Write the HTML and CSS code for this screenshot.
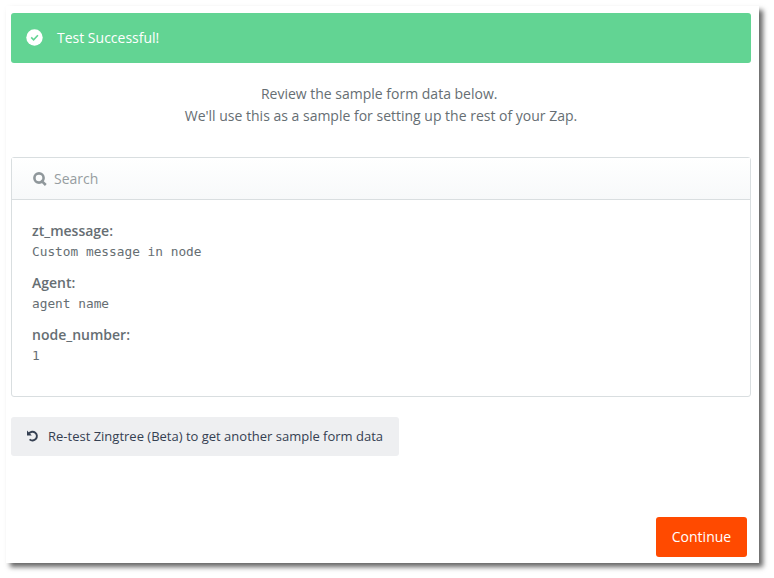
FILE: index.html
```html
<!DOCTYPE html>
<html lang="en">
<head>
    <meta charset="UTF-8">
    <meta name="viewport" content="width=device-width, initial-scale=1.0">
    <title>Test Zap</title>
    <link rel="stylesheet" href="styles.css">
</head>
<body>
<div class="panel">
    <!-- Status -->
    <div class="alert">
        <svg class="alert-icon" viewBox="0 0 17 17" width="17" height="17">
            <circle cx="8.5" cy="8.5" r="8.2" fill="#fff"/>
            <path d="M5.2 8.4l2.4 2.4 4.3-4.6" fill="none" stroke="#62d493" stroke-width="1.6"/>
        </svg>
        <span>Test Successful!</span>
    </div>

    <p class="intro">Review the sample form data below.&nbsp;<br>We'll use this as a sample for setting up the rest of your Zap.</p>

    <!-- Sample data -->
    <div class="sample">
        <div class="search">
            <svg class="search-icon" viewBox="0 0 14 14" width="14" height="14">
                <circle cx="6" cy="6" r="4.6" fill="none" stroke="#8f979b" stroke-width="2.6"/>
                <path d="M8 8.4l4.8 4.6" stroke="#8f979b" stroke-width="2.6"/>
            </svg>
            <span>Search</span>
        </div>
        <dl class="fields">
            <dt>zt_message:</dt>
            <dd>Custom message in node</dd>
            <dt>Agent:</dt>
            <dd>agent name</dd>
            <dt>node_number:</dt>
            <dd>1</dd>
        </dl>
    </div>

    <button class="retest">
        <svg class="retest-icon" viewBox="0 0 12 12" width="12" height="12">
            <path d="M2 3.4A4.4 4.4 0 1 1 2.6 9.4" fill="none" stroke="#354052" stroke-width="1.9"/>
            <path d="M0 0.6v4.8h4.8z" fill="#354052"/>
        </svg>
        <span>Re-test Zingtree (Beta) to get another sample form data</span>
    </button>

    <div class="actions">
        <button class="continue">Continue</button>
    </div>
</div>
</body>
</html>
```
FILE: styles.css
```css
* {
    margin: 0;
    padding: 0;
    box-sizing: border-box;
}
body {
    min-height: 578px;
    padding: 6px;
    font-family: "Open Sans", sans-serif;
    font-size: 14px;
    color: #666e73;
    background-color: #fff;
}

.panel {
    width: 753px;
    height: 557px;
    padding: 7px 8px 0 5px;
    background-color: #fff;
    box-shadow: 4px 4px 5px rgba(0, 0, 0, 0.6);
}

/* Status */
.alert {
    display: flex;
    align-items: center;
    height: 50px;
    padding: 0 15px 1px;
    border-radius: 3px;
    background-color: #62d493;
    color: #fff;
}
.alert-icon {
    margin-right: 14px;
}

.intro {
    margin-top: 20px;
    line-height: 22px;
    text-align: center;
}

/* Sample data */
.sample {
    height: 240px;
    margin-top: 30px;
    border: 1px solid #d9dee0;
    border-radius: 3px;
}
.search {
    display: flex;
    align-items: center;
    height: 42px;
    padding-left: 21px;
    border-bottom: 1px solid #d9dee0;
    background: linear-gradient(#fff, #f7f9fa);
    color: #969da0;
}
.search-icon {
    margin-right: 7px;
}
.fields {
    padding: 20px;
}
.fields dt {
    line-height: 21px;
    font-weight: 600;
}
.fields dd {
    margin-bottom: 10px;
    line-height: 21px;
    font-family: "DejaVu Sans Mono", monospace;
    font-size: 12.8px;
}

/* Buttons */
button {
    border: none;
    font-family: inherit;
    cursor: pointer;
}
.retest {
    display: flex;
    align-items: center;
    width: 388px;
    height: 39px;
    margin-top: 20px;
    padding: 0 0 2px 16px;
    border-radius: 3px;
    background-color: #eeeff1;
    color: #354052;
    font-size: 13px;
    white-space: nowrap;
}
.retest-icon {
    margin-right: 9px;
}
.actions {
    display: flex;
    justify-content: flex-end;
    margin-top: 61px;
    padding-right: 4px;
}
.continue {
    width: 91px;
    height: 40px;
    padding-bottom: 2px;
    border-radius: 3px;
    background-color: #ff4a00;
    color: #fff;
    font-size: 14px;
}
```
